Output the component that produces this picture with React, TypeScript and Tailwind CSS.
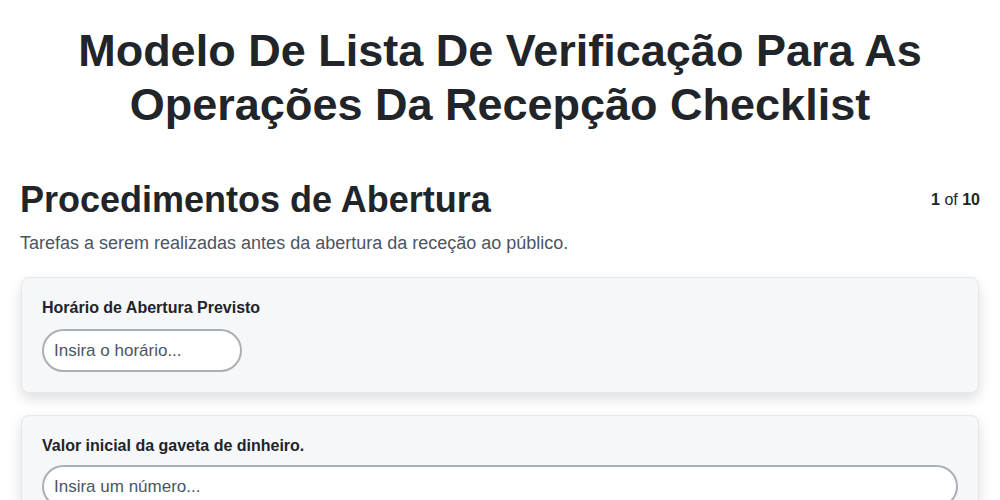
export default function App() {
  return (
    <div className="min-h-screen bg-white px-5 font-['Liberation_Sans',Arial,sans-serif] text-[#1f2328]">
      <h1 className="pt-[24px] text-center text-[45px] font-bold leading-[54px] text-[#212529]">
        Modelo De Lista De Verificação Para As
        <br />
        Operações Da Recepção Checklist
      </h1>

      <div className="mt-[46px] flex items-start justify-between">
        <h2 className="text-[36px] font-bold leading-[44px] text-[#212529]">
          Procedimentos de Abertura
        </h2>
        <div className="pt-[10px] text-[16px] text-[#212529]">
          <span className="font-bold">1</span> of <span className="font-bold">10</span>
        </div>
      </div>
      <p className="mt-[8px] text-[18px] text-[#4b5563]">
        Tarefas a serem realizadas antes da abertura da receção ao público.
      </p>

      <div className="mt-[20px] flex flex-col gap-[22px]">
        <div className="mx-px rounded-lg border border-[#e5e7eb] bg-[#f6f7f9] px-5 pt-[18px] pb-[20px] shadow-[0_6px_14px_rgba(0,0,0,0.13)]">
          <label className="block text-[16px] font-bold leading-[24px] text-[#212529]">
            Horário de Abertura Previsto
          </label>
          <input
            className="mt-[9px] h-[43px] w-[200px] rounded-full border-2 border-[#aab0b7] bg-white px-[10px] text-[17px] text-[#212529] placeholder:text-[#4b5563] outline-none"
            placeholder="Insira o horário..."
          />
        </div>
        <div className="mx-px rounded-lg border border-[#e5e7eb] bg-[#f6f7f9] px-5 pt-[18px] pb-[20px] shadow-[0_6px_14px_rgba(0,0,0,0.13)]">
          <label className="block text-[16px] font-bold leading-[24px] text-[#212529]">
            Valor inicial da gaveta de dinheiro.
          </label>
          <input
            className="mt-[7px] h-[43px] w-full rounded-full border-2 border-[#aab0b7] bg-white px-[10px] text-[17px] text-[#212529] placeholder:text-[#4b5563] outline-none"
            placeholder="Insira um número..."
          />
        </div>
      </div>
    </div>
  );
}
